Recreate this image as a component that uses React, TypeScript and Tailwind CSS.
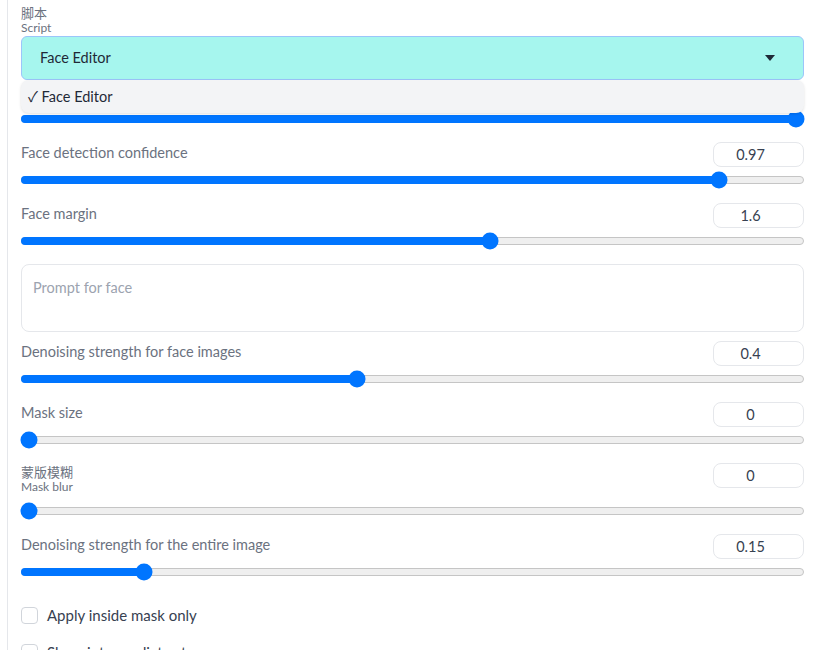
import React from "react"

const font = { fontFamily: "Lato, 'Noto Sans CJK SC', sans-serif" }

type SliderProps = { pos: number; className?: string }

// pos is the thumb centre as a fraction 0..1 of the thumb's travel
function Slider({ pos, className = "" }: SliderProps) {
  const pct = `calc(8px + (100% - 16px) * ${pos})`
  return (
    <div className={`relative h-[8px] ${className}`}>
      <div className="absolute inset-0 rounded-full border border-[#c5c5c5] bg-[#efefef]" />
      <div className="absolute left-0 top-0 h-full rounded-full bg-[#0075ff]" style={{ width: pct }} />
      <div
        className="absolute top-1/2 h-[17px] w-[17px] -translate-x-1/2 -translate-y-1/2 rounded-full bg-[#0075ff]"
        style={{ left: pct }}
      />
    </div>
  )
}

type RowProps = { label: React.ReactNode; value: string; pos: number; tall?: boolean }

function SliderRow({ label, value, pos, tall }: RowProps) {
  return (
    <div className="mt-[19px]">
      <div className={`flex justify-between ${tall ? "h-[35px] items-start" : "h-[25px] items-center"}`}>
        <div className={`text-[14.5px] leading-5 text-[#6b7280] ${tall ? "" : "pb-[4px]"}`}>{label}</div>
        <div className="flex h-[25px] w-[91px] items-center justify-center rounded-lg border border-[#e5e7eb] bg-white pr-[16px] text-[14.5px] text-[#374151]">
          {value}
        </div>
      </div>
      <Slider pos={pos} className="mt-[9px]" />
    </div>
  )
}

function Checkbox({ label }: { label: string }) {
  return (
    <label className="flex h-[17px] items-center gap-[9px]">
      <span className="h-[17px] w-[17px] shrink-0 rounded-[4px] border border-[#d1d5db] bg-white" />
      <span className="text-[15px] leading-[17px] text-[#374151]">{label}</span>
    </label>
  )
}

export default function App() {
  return (
    <div className="h-[650px] w-[827px] overflow-hidden bg-white" style={font}>
      <div className="ml-[7px] h-full border-l border-[#e5e7eb] pl-[13px] pr-[23px]">
        {/* Script selector */}
        <div className="pt-[6px] text-[#6b7280]">
          <div className="text-[13px] leading-[15px]">脚本</div>
          <div className="text-[12px] leading-[13px]">Script</div>
        </div>
        <div className="relative mt-[2px]">
          <div className="flex h-[44px] items-center justify-between rounded-md border border-[#9cc5fa] bg-[#a6f6ee] pl-[18px] pr-[28px] text-[14.5px] text-[#1f2937]">
            <span>Face Editor</span>
            <svg width="10" height="6" viewBox="0 0 10 6">
              <path d="M0 0h10L5 6z" fill="#1f2937" />
            </svg>
          </div>
          <div className="absolute left-0 right-0 top-[44px] z-10 flex h-[33px] items-center rounded-lg bg-[#f3f4f6] px-[7px] text-[14.5px] text-[#1f2937] shadow-[0_1px_3px_rgba(0,0,0,0.12)]">
            ✓ Face Editor
          </div>
          <Slider pos={1} className="mt-[35px]" />
        </div>

        <SliderRow label="Face detection confidence" value="0.97" pos={0.8995} />
        <SliderRow label="Face margin" value="1.6" pos={0.6005} />

        <div className="mt-[19px] h-[68px] rounded-lg border border-[#e5e7eb] px-[11px] pt-[12px] text-[14.5px] text-[#9ca3af]">
          Prompt for face
        </div>

        <div className="-mt-[10px]">
          <SliderRow label="Denoising strength for face images" value="0.4" pos={0.4282} />
        </div>
        <SliderRow label="Mask size" value="0" pos={0} />
        <SliderRow
          label={
            <div className="pt-[2px]">
              <div className="text-[13px] leading-[15px]">蒙版模糊</div>
              <div className="text-[12px] leading-[13px]">Mask blur</div>
            </div>
          }
          value="0"
          pos={0}
          tall
        />
        <SliderRow label="Denoising strength for the entire image" value="0.15" pos={0.1501} />

        <div className="mt-[31px] flex flex-col gap-[20px]">
          <Checkbox label="Apply inside mask only" />
          <Checkbox label="Show intermediate steps" />
        </div>
      </div>
    </div>
  )
}
